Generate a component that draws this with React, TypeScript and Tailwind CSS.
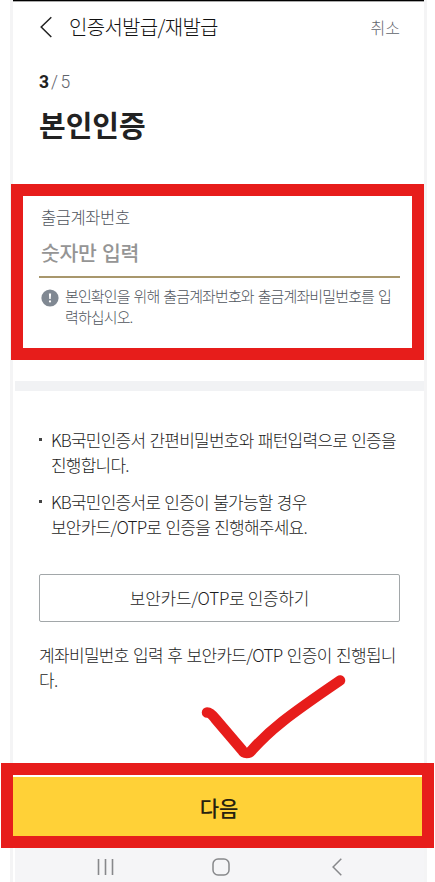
const notices = [
  ["KB국민인증서 간편비밀번호와 패턴입력으로 인증을", "진행합니다."],
  ["KB국민인증서로 인증이 불가능할 경우", "보안카드/OTP로 인증을 진행해주세요."],
];

function Header() {
  return (
    <header className="flex h-[50px] items-center pl-[27px] pr-[24px]">
      <svg width="12" height="22" viewBox="0 0 12 22" fill="none" className="text-[#222]">
        <path d="M11.3 1.2 1.2 11l10.1 10" stroke="currentColor" strokeWidth="1.5" />
      </svg>
      <h1 className="ml-[17px] text-[20px] font-light tracking-[-0.7px] text-[#111]">
        인증서발급/재발급
      </h1>
      <button type="button" className="ml-auto text-[16px] font-light text-[#5f646c]">
        취소
      </button>
    </header>
  );
}

function AccountField() {
  return (
    <section className="-ml-[2px] mt-[39px] h-[176px] shrink-0 border-[12px] border-[#e71d1b] pl-[16px] pr-[12px] pt-[9px]">
      <label className="block pl-[2px] text-[16.5px] font-light leading-[24px] tracking-[-0.4px] text-[#50555d]">
        출금계좌번호
      </label>
      <div className="h-[49px] border-b-2 border-[#a8976c] pl-[2px] pt-[8px] text-[20.5px] font-medium leading-[30px] tracking-[-0.4px] text-[#959595] [word-spacing:1.5px]">
        숫자만 입력
      </div>
      <div className="mt-[7px] flex pl-[2px]">
        <svg width="18" height="18" viewBox="0 0 18 18" className="mt-[4px] shrink-0">
          <circle cx="9" cy="9" r="8.6" fill="#808892" />
          <path d="M7.9 4.6h2.2l-.4 5.4H8.3z" fill="#fff" />
          <circle cx="9" cy="12.4" r="1.1" fill="#fff" />
        </svg>
        <p className="ml-[6px] whitespace-nowrap text-[15px] font-light leading-[21px] tracking-[-0.88px] text-[#50555d] [word-spacing:1.5px]">
          본인확인을 위해 출금계좌번호와 출금계좌비밀번호를 입
          <br />
          력하십시오.
        </p>
      </div>
    </section>
  );
}

function CheckMark() {
  return (
    <svg width="148" height="90" viewBox="0 0 148 90" fill="none" className="absolute left-[200px] top-[673px]">
      <path
        d="M7 39.500c3 0 6 3 9 7L42 77c2 4 7 4 10 0 18-20 33-32 88-69.500"
        stroke="#e71d1b"
        strokeWidth="10.500"
        strokeLinecap="round"
        strokeLinejoin="round"
      />
    </svg>
  );
}

function NavBar() {
  return (
    <nav className="ml-[2px] flex h-[34px] shrink-0 items-center bg-[#f5f5f7] pl-[82px] text-[#87888b]">
      <svg width="17" height="18" viewBox="0 0 17 18" className="mt-[3px]">
        <path d="M1.500 1v16M8.500 1v16M15.500 1v16" stroke="currentColor" strokeWidth="1.600" />
      </svg>
      <svg width="18" height="18" viewBox="0 0 18 18" fill="none" className="ml-[98px] mt-[3px]">
        <rect x="1" y="1" width="16" height="16" rx="5" stroke="currentColor" strokeWidth="1.500" />
      </svg>
      <svg width="10" height="18" viewBox="0 0 10 18" fill="none" className="ml-[102px] mt-[3px]">
        <path d="M9.300 .8 1.100 9l8.200 8.200" stroke="currentColor" strokeWidth="1.500" />
      </svg>
    </nav>
  );
}

export default function App() {
  return (
    <div className="relative h-[882px] w-[435px] overflow-hidden bg-white font-['Noto_Sans_CJK_KR',sans-serif] text-[#1c1c1c]">
      <main className="ml-[10px] flex h-full w-[417px] flex-col border-x-[3px] border-[#f4f4f5]">
        <div className="h-[2px] shrink-0 border-b border-[#aaa] bg-black" />
        <Header />

        <div className="mt-[18px] flex h-[24px] items-center pl-[26px] text-[17.5px] leading-[24px]">
          <span className="font-['Roboto',sans-serif] font-bold text-[#222]">3</span>
          <span className="ml-[2px] font-['Roboto',sans-serif] font-light tracking-[2.5px] text-[#5f646c]">/5</span>
        </div>
        <h2 className="mt-[10px] h-[41px] pl-[26px] text-[29px] font-bold leading-[41px] text-[#222]">
          본인인증
        </h2>

        <AccountField />

        <div className="ml-[2px] mt-[21px] h-[10px] shrink-0 bg-[#f1f2f4]" />

        <ul className="mt-[36px] flex flex-col gap-[12px] pl-[26px] text-[17px] font-light leading-[25px] tracking-[-0.77px] [word-spacing:1.2px]">
          {notices.map((lines) => (
            <li key={lines[0]} className="flex">
              <span className="mt-[11px] h-[3px] w-[3px] bg-[#444]" />
              <p className="ml-[9px] whitespace-nowrap">
                {lines[0]}
                <br />
                {lines[1]}
              </p>
            </li>
          ))}
        </ul>

        <button
          type="button"
          className="ml-[26px] mt-[35px] h-[48px] w-[361px] shrink-0 rounded-[2px] border border-[#a2a7a9] text-[17px] font-light tracking-[-0.3px]"
        >
          보안카드/OTP로 인증하기
        </button>
        <p className="mt-[20px] whitespace-nowrap pl-[26px] text-[17px] font-light leading-[25px] tracking-[-0.68px] [word-spacing:1.2px]">
          계좌비밀번호 입력 후 보안카드/OTP 인증이 진행됩니
          <br />
          다.
        </p>

        <div className="-ml-[12px] mt-[71px] h-[85px] w-[433px] shrink-0 border-[12px] border-[#e71d1b] pt-[2px]">
          <button type="button" className="h-[59px] w-full bg-[#ffd137] pl-[3px] pt-[2px] text-[21px] font-medium text-[#27210f]">
            다음
          </button>
        </div>
        <NavBar />
      </main>
      <CheckMark />
    </div>
  );
}
